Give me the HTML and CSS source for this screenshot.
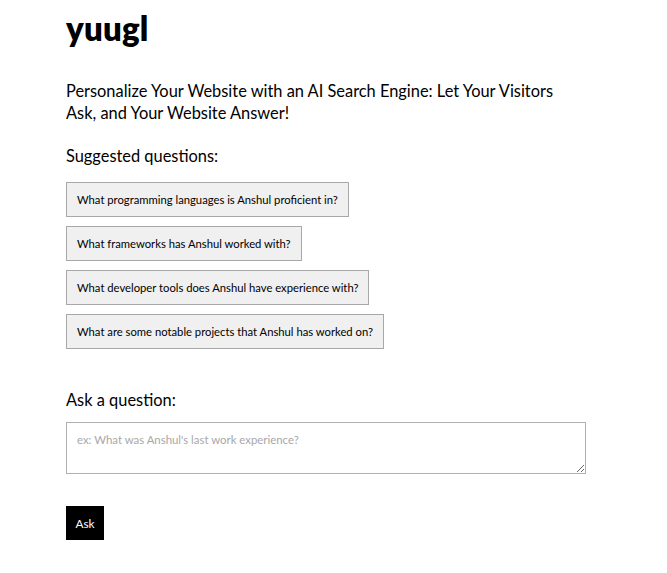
FILE: index.html
```html
<!DOCTYPE html>
<html>
<head>
<meta charset="utf-8">
<link rel="stylesheet" href="styles.css">
</head>
<body>
<main class="page">
  <h1 class="logo">yuugl</h1>
  <p class="tagline">Personalize Your Website with an AI Search Engine: Let Your Visitors Ask, and Your Website Answer!</p>
  <h2 class="label">Suggested questions:</h2>
  <div class="suggestions">
    <button class="chip">What programming languages is Anshul proficient in?</button>
    <button class="chip">What frameworks has Anshul worked with?</button>
    <button class="chip">What developer tools does Anshul have experience with?</button>
    <button class="chip">What are some notable projects that Anshul has worked on?</button>
  </div>
  <h2 class="label ask-label">Ask a question:</h2>
  <textarea class="question" placeholder="ex: What was Anshul's last work experience?"></textarea>
  <button class="ask">Ask</button>
</main>
</body>
</html>
```
FILE: styles.css
```css
* { box-sizing: border-box; }
body {
  margin: 0;
  background: #fff;
  color: #000;
  font-family: "Lato", "Noto Sans", sans-serif;
}
.page {
  width: 520px;
  margin-left: 66px;
  padding-top: 6px;
  display: flex;
  flex-direction: column;
  align-items: flex-start;
}
.logo {
  margin: 0;
  font-size: 33px;
  font-weight: 800;
  line-height: 44px;
  letter-spacing: 0.2px;
}
.tagline {
  margin: 30px 0 0;
  font-size: 16.4px;
  line-height: 22px;
}
.label {
  margin: 21px 0 0;
  font-size: 16.4px;
  font-weight: 400;
  line-height: 22px;
}
.suggestions {
  margin-top: 15px;
  display: flex;
  flex-direction: column;
  align-items: flex-start;
  gap: 9px;
}
.chip {
  font-family: inherit;
  font-size: 11.25px;
  color: #000;
  background: #f0f0f0;
  border: 1px solid #a8a8a8;
  height: 35px;
  padding: 0 10px;
  cursor: pointer;
}
.ask-label { margin-top: 40px; }
.question {
  margin-top: 11px;
  width: 520px;
  height: 52px;
  font-family: inherit;
  font-size: 11.4px;
  padding: 10px 10px;
  border: 1px solid #b0b0b0;
  resize: vertical;
}
.question::placeholder { color: #a8a8a8; }
.ask {
  margin-top: 32px;
  width: 38px;
  height: 34px;
  background: #000;
  color: #fff;
  border: none;
  font-family: inherit;
  font-size: 11.8px;
  padding: 0;
}
```
